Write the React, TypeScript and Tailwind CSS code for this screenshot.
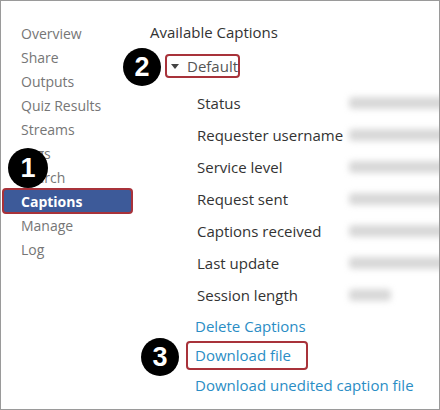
const navItems = ['Overview', 'Share', 'Outputs', 'Quiz Results', 'Streams', 'Tags', 'Search', 'Captions', 'Manage', 'Log'];

const details = [
  { label: 'Status', width: 100 },
  { label: 'Requester username', width: 100 },
  { label: 'Service level', width: 100 },
  { label: 'Request sent', width: 100 },
  { label: 'Captions received', width: 100 },
  { label: 'Last update', width: 100 },
  { label: 'Session length', width: 42 },
];

function Marker({ n, className }: { n: number; className: string }) {
  return (
    <div
      className={`absolute rounded-full bg-black text-white flex items-center justify-center text-[27px] font-bold leading-none ${className}`}
      style={{ fontFamily: '"Liberation Sans", Arial, sans-serif' }}
    >
      {n}
    </div>
  );
}

export default function App() {
  return (
    <div
      className="relative w-[440px] h-[410px] bg-white border border-[#9a9a9a] flex overflow-hidden"
      style={{ fontFamily: '"Open Sans", "Noto Sans", sans-serif' }}
    >
      {/* Sidebar */}
      <div className="w-[149px] shrink-0 pt-[20px] flex flex-col">
        {navItems.map((item) =>
          item === 'Captions' ? (
            <div
              key={item}
              className="ml-[1px] w-[131px] h-[26px] -my-[1px] border-2 border-[#a8323a] rounded-[4px] bg-[#3d5a99] flex items-center pl-[17px] text-[14px] font-bold text-white"
            >
              {item}
            </div>
          ) : (
            <div key={item} className="h-[24px] flex items-center pl-[20px] text-[14px] text-[#767676]">
              {item}
            </div>
          )
        )}
      </div>

      {/* Main */}
      <div className="flex-1 min-w-0 pt-[19px]">
        <div className="h-[24px] flex items-center text-[15px] text-[#333]">Available Captions</div>
        <div className="mt-[10px] ml-[15px] w-[75px] h-[24px] border-2 border-[#a8323a] rounded-[4px] flex items-center pl-[4px] gap-[8px] text-[15px] text-[#555]">
          <span className="w-0 h-0 border-l-[4px] border-r-[4px] border-t-[5px] border-l-transparent border-r-transparent border-t-[#444]" />
          <span>Default</span>
        </div>
        <div className="mt-[9px] flex flex-col">
          {details.map((d) => (
            <div key={d.label} className="h-[32px] flex items-center">
              <div className="w-[199px] shrink-0 pl-[47px] text-[15px] text-[#333] whitespace-nowrap">{d.label}</div>
              <div className="h-[12px] bg-[#d8d8d8] blur-[3px] rounded shrink-0" style={{ width: d.width }} />
            </div>
          ))}
        </div>
        <div className="flex flex-col text-[15px] text-[#2a8dc5]">
          <div className="h-[30px] flex items-center pl-[45px]">Delete Captions</div>
          <div className="ml-[36px] w-[122px] h-[29px] border-2 border-[#a8323a] rounded-[4px] flex items-center pl-[7px]">
            Download file
          </div>
          <div className="h-[30px] flex items-center pl-[45px] whitespace-nowrap">Download unedited caption file</div>
        </div>
      </div>

      <Marker n={1} className="left-[7px] top-[147px] w-[40px] h-[40px]" />
      <Marker n={2} className="left-[122px] top-[47px] w-[38px] h-[38px]" />
      <Marker n={3} className="left-[140px] top-[337px] w-[38px] h-[38px]" />
    </div>
  );
}
